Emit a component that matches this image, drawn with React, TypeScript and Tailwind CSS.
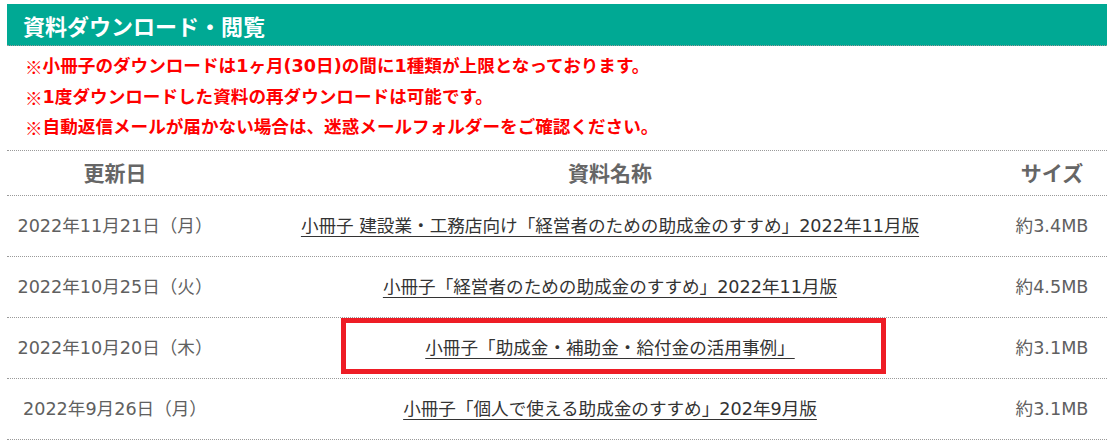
import React from "react";

const FONT = { fontFamily: '"DejaVu Sans", "Noto Sans CJK JP", sans-serif' };
const CJK = { fontFamily: '"Noto Sans CJK JP", sans-serif' };

const rows = [
  {
    date: "2022年11月21日（月）",
    name: "小冊子 建設業・工務店向け「経営者のための助成金のすすめ」2022年11月版",
    size: "約3.4MB",
  },
  {
    date: "2022年10月25日（火）",
    name: "小冊子「経営者のための助成金のすすめ」2022年11月版",
    size: "約4.5MB",
  },
  {
    date: "2022年10月20日（木）",
    name: "小冊子「助成金・補助金・給付金の活用事例」",
    size: "約3.1MB",
    boxed: true,
  },
  {
    date: "2022年9月26日（月）",
    name: "小冊子「個人で使える助成金のすすめ」202年9月版",
    size: "約3.1MB",
  },
];

const notes = [
  "小冊子のダウンロードは1ヶ月(30日)の間に1種類が上限となっております。",
  "1度ダウンロードした資料の再ダウンロードは可能です。",
  "自動返信メールが届かない場合は、迷惑メールフォルダーをご確認ください。",
];

export default function App() {
  return (
    <div className="bg-white w-[1113px] h-[443px] pt-[4px] pl-[7px]" style={FONT}>
      <div className="w-[1100px]">
        <div className="h-[42px] bg-[#00a994] border-b border-dotted border-[#9a9a9a] flex items-center pl-[16px]">
          <h2 className="text-white font-bold text-[22px] leading-none" style={CJK}>
            資料ダウンロード・閲覧
          </h2>
        </div>
        <div className="h-[104px] pt-[6px] pl-[18px] text-[#ff0000] font-bold text-[17.6px] flex flex-col">
          {notes.map((n, i) => (
            <p key={i} className="h-[30.5px] flex items-center whitespace-nowrap leading-none">
              <span style={CJK}>※</span>
              <span>{n}</span>
            </p>
          ))}
        </div>
        <div className="border-t border-dotted border-[#9a9a9a]">
          <div
            className="grid grid-cols-[216px_1fr_110px] h-[45px] border-b border-dotted border-[#9a9a9a] items-center text-[#666] font-bold text-[21px]"
            style={CJK}
          >
            <div className="text-center">更新日</div>
            <div className="text-center">資料名称</div>
            <div className="text-center">サイズ</div>
          </div>
          {rows.map((r, i) => (
            <div
              key={i}
              className="grid grid-cols-[216px_1fr_110px] h-[61px] border-b border-dotted border-[#9a9a9a] items-center text-[17.6px] text-[#606060]"
            >
              <div className="text-center whitespace-nowrap">{r.date}</div>
              <div className="relative h-full flex items-center justify-center">
                <a
                  href="#"
                  className="text-[#333] underline underline-offset-[4px] decoration-[1px] whitespace-nowrap"
                >
                  {r.name}
                </a>
                {r.boxed && (
                  <div className="absolute left-[118px] top-0 w-[545px] h-[56px] border-[5px] border-[#ee1c25] pointer-events-none" />
                )}
              </div>
              <div className="text-center whitespace-nowrap">{r.size}</div>
            </div>
          ))}
        </div>
      </div>
    </div>
  );
}
